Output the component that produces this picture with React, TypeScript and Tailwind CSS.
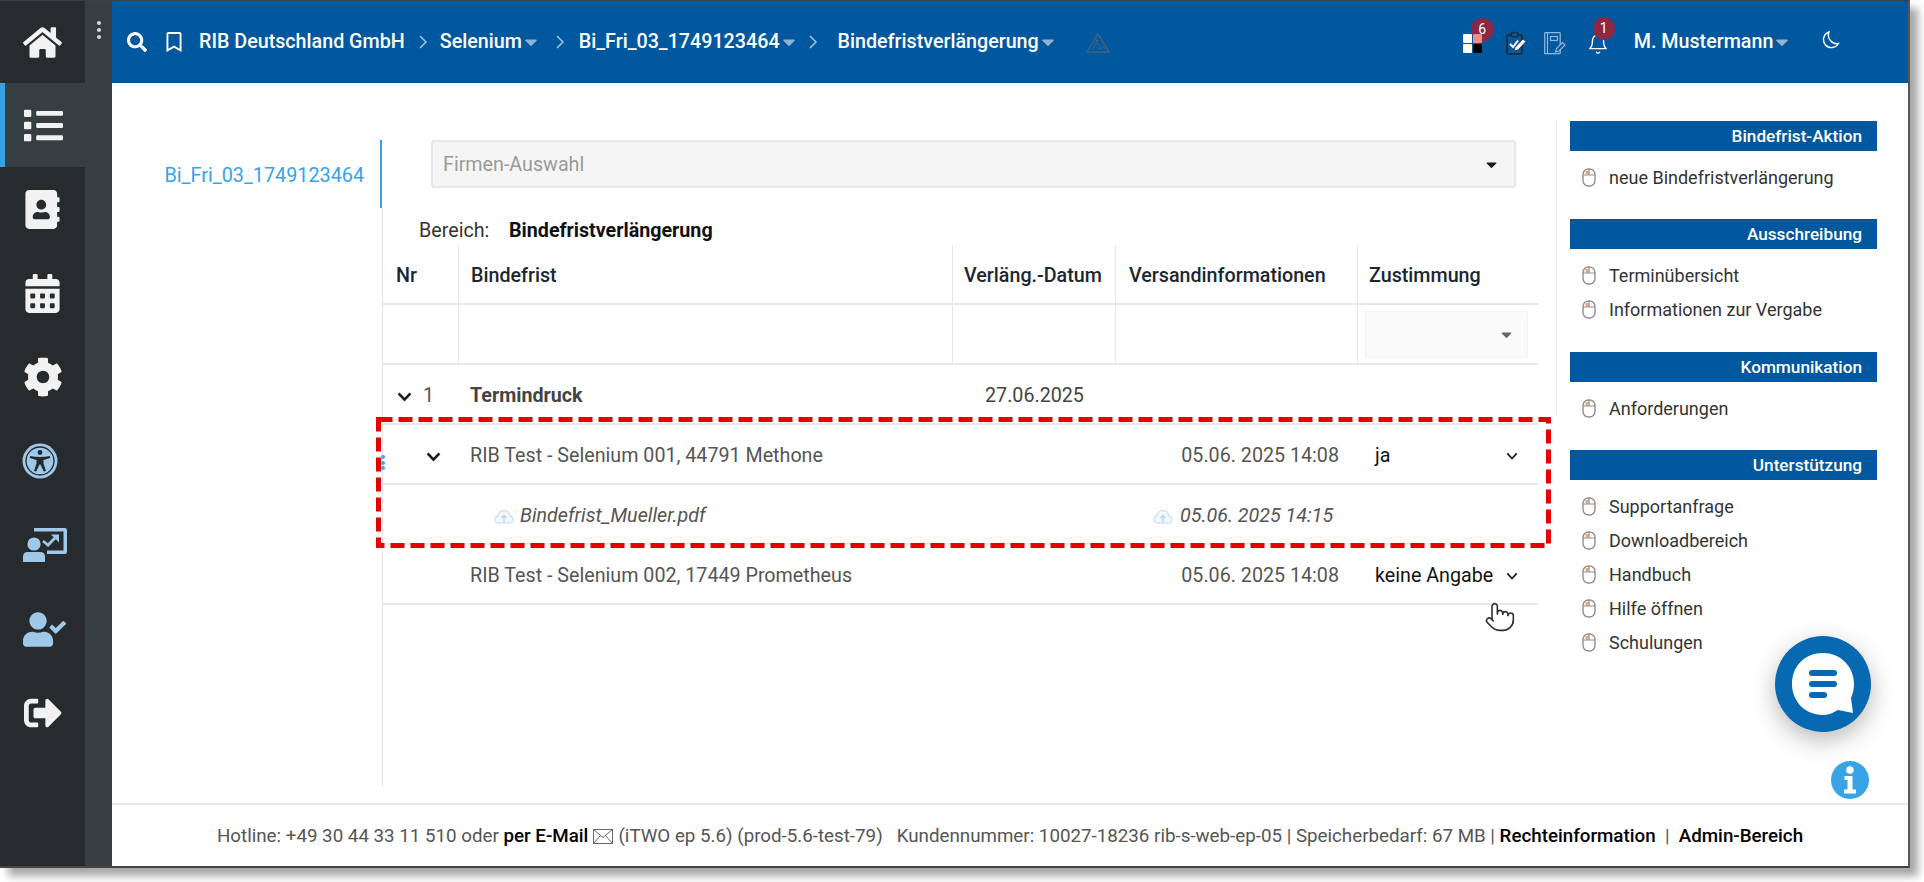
import React from "react";
import {
  FaHome, FaList, FaAddressBook, FaCalendarAlt, FaCog, FaUserCheck, FaSignOutAlt,
  FaSearch, FaRegBookmark, FaCaretDown,
} from "react-icons/fa";
import { FiBell } from "react-icons/fi";
import { Pointer } from "lucide-react";

function Chevron({ size = 14, w = 2.4 }: { size?: number; w?: number }) {
  return (
    <svg width={size} height={size} viewBox="0 0 14 14" fill="none" stroke="#1c1c1c" strokeWidth={w} className="shrink-0">
      <path d="M1.5 4 L7 10 L12.5 4" />
    </svg>
  );
}

function MouseIcon() {
  return (
    <svg width="14" height="19" viewBox="0 0 14 19" fill="none" className="shrink-0">
      <rect x="1" y="1" width="12" height="17" rx="5.5" stroke="#8f8f8f" strokeWidth="1.4" fill="#fff" />
      <rect x="3.5" y="3" width="3" height="3.5" fill="#f5a467" />
      <path d="M1 7 H13 M7 1 V7" stroke="#8f8f8f" strokeWidth="1.2" />
    </svg>
  );
}

function CloudIcon() {
  return (
    <svg width="20" height="15" viewBox="0 0 20 15" fill="#f2f8fd" stroke="#cfe3f4" strokeWidth="1.3" className="shrink-0">
      <path d="M5 14 Q1 14 1 10.5 Q1 7.5 4 7 Q5 1.5 10 1.5 Q15 1.5 16 7 Q19 7.5 19 10.5 Q19 14 15 14 Z" />
      <path d="M10 13 V7 M7.5 9 L10 6.5 L12.5 9" fill="none" stroke="#bcd8f0" strokeWidth="1.6" />
    </svg>
  );
}

function AccessIcon() {
  return (
    <svg width="36" height="36" viewBox="0 0 36 36" className="mr-[6px]">
      <circle cx="18" cy="18" r="17.5" fill="#a0c8e8" />
      <circle cx="18" cy="18" r="14" fill="none" stroke="#23282b" strokeWidth="1.3" />
      <circle cx="18" cy="9.5" r="2.4" fill="#23282b" />
      <path d="M8 13 Q18 15 28 13 L28 15 L21.5 17 L21.5 20.5 L24 28 L21.8 28.6 L18.5 21.5 L17.5 21.5 L14.2 28.6 L12 28 L14.5 20.5 L14.5 17 L8 15 Z" fill="#23282b" />
    </svg>
  );
}

function PresentIcon() {
  return (
    <svg width="44" height="34" viewBox="0 0 44 34" fill="#a0c8e8" className="ml-[4px]">
      <path d="M11 0 H42 Q44 0 44 2 V24 Q44 26 42 26 H24 V22.5 H40.5 V3.5 H11 Z" />
      <path d="M20 13 L25 17 L32 10" fill="none" stroke="#a0c8e8" strokeWidth="2.8" />
      <path d="M28 6.5 H36 V14.5 Z" />
      <circle cx="11" cy="16" r="6.6" />
      <path d="M0 34 V29 Q0 24 5 24 H17 Q22 24 22 29 V34 Z" />
    </svg>
  );
}

function ClipboardIcon() {
  return (
    <svg width="21" height="24" viewBox="0 0 21 24" fill="none">
      <rect x="1" y="4" width="15" height="19" rx="2" fill="#05589e" stroke="#1f2d3d" strokeWidth="1.8" />
      <rect x="5" y="1.5" width="7" height="4.5" rx="2" fill="#05589e" stroke="#1f2d3d" strokeWidth="1.5" />
      <path d="M4 13 L7 16 L12 9.5" stroke="#fff" strokeWidth="2" />
      <path d="M8 20 L9 16.5 L17 8 L20 10.5 L12 19 Z" fill="#fff" stroke="#1f2d3d" strokeWidth="0.8" />
    </svg>
  );
}

function NotebookIcon() {
  return (
    <svg width="22" height="23" viewBox="0 0 22 23" fill="none" stroke="#8fb9dc" strokeWidth="1.2">
      <rect x="0.7" y="0.7" width="15.5" height="21" rx="0.5" />
      <path d="M3.5 1 V21.5" />
      <rect x="6.5" y="4.5" width="7" height="4" />
      <path d="M11.5 20 L12.5 16.5 L18.5 10.5 L21 13 L15 19 Z" fill="#05589e" />
    </svg>
  );
}

function WarnIcon() {
  return (
    <svg width="24" height="21" viewBox="0 0 24 21" fill="none" stroke="#41617f" strokeWidth="1.5">
      <path d="M12 1.5 L23 20 H1 Z" />
      <circle cx="11" cy="8.5" r="1.3" fill="#41617f" stroke="none" />
      <path d="M7 17 L10 11 L13 13 L14 17 M15 17 L17 14 L19 17" strokeWidth="1.2" />
    </svg>
  );
}

function ChatIcon() {
  return (
    <svg width="62" height="62" viewBox="0 0 62 62">
      <path d="M31 0 C48 0 62 13 62 31 C62 36 61 40 59 45 L61 60 L46 57 C41 60 36 62 31 62 C13 62 0 48 0 31 C0 13 13 0 31 0 Z" fill="#fff" />
      <rect x="17" y="17" width="28" height="6" rx="3" fill="#0669b2" />
      <rect x="17" y="28" width="28" height="6" rx="3" fill="#0669b2" />
      <rect x="17" y="39" width="18" height="6" rx="3" fill="#0669b2" />
    </svg>
  );
}

function InfoGlyph() {
  return (
    <svg width="14" height="28" viewBox="0 0 14 28" fill="#fff">
      <circle cx="7" cy="4" r="3.8" />
      <path d="M1.5 10 H9.5 V23.5 H13 V27.5 H1 V23.5 H4.5 V14 H1.5 Z" />
    </svg>
  );
}

function EnvelopeIcon() {
  return (
    <svg width="20" height="15" viewBox="0 0 20 15" fill="none" stroke="#666" strokeWidth="1" className="mx-[5px] shrink-0">
      <rect x="0.5" y="0.5" width="19" height="14" />
      <path d="M0.5 0.5 L10 8.5 L19.5 0.5 M0.5 14.5 L7.5 6.5 M19.5 14.5 L12.5 6.5" />
    </svg>
  );
}

const Crumb = ({ children }: { children: React.ReactNode }) => (
  <span className="flex items-center">
    <span>{children}</span>
    <FaCaretDown size={20} className="text-[#8fb3d1] ml-[-1px]" />
  </span>
);

const Sep = () => (
  <svg width="8" height="14" viewBox="0 0 8 14" fill="none" stroke="#a9c5dd" strokeWidth="1.5" className="shrink-0">
    <path d="M1 1 L7 7 L1 13" />
  </svg>
);

const sideIcons = [
  <FaAddressBook size={39} />,
  <FaCalendarAlt size={39} />,
  <FaCog size={40} />,
  <AccessIcon />,
  <PresentIcon />,
  <FaUserCheck size={43} className="text-[#a0c8e8] ml-[4px]" />,
  <FaSignOutAlt size={38} />,
];

const sections = [
  { title: "Bindefrist-Aktion", items: ["neue Bindefristverlängerung"], pb: "pb-[25px]" },
  { title: "Ausschreibung", items: ["Terminübersicht", "Informationen zur Vergabe"], pb: "pb-[26px]" },
  { title: "Kommunikation", items: ["Anforderungen"], pb: "pb-[25px]" },
  { title: "Unterstützung", items: ["Supportanfrage", "Downloadbereich", "Handbuch", "Hilfe öffnen", "Schulungen"], pb: "pb-0" },
];

const gridCols = "grid grid-cols-[76px_494px_163px_242px_180px]";

export default function App() {
  return (
    <div className="relative w-[1924px] h-[882px] bg-white overflow-hidden font-['Roboto',sans-serif]">
      <div className="relative flex w-[1910px] h-[868px] bg-white border-t border-[#3a4045] border-b-2 border-b-[#444] border-r-2 border-r-[#555] shadow-[8px_8px_8px_rgba(0,0,0,0.35)]">
        {/* Sidebar */}
        <aside className="flex flex-col w-[112px] shrink-0 bg-[#373e42] text-[#f2f2f2]">
          <div className="flex h-[82px]">
            <div className="w-[85px] bg-[#272b2e] flex items-center justify-center">
              <FaHome size={39} />
            </div>
            <div className="flex-1 flex flex-col items-center gap-[3px] pt-[20px]">
              <span className="w-[4px] h-[4px] rounded-full bg-[#d8d8d8]" />
              <span className="w-[4px] h-[4px] rounded-full bg-[#d8d8d8]" />
              <span className="w-[4px] h-[4px] rounded-full bg-[#d8d8d8]" />
            </div>
          </div>
          <div className="flex h-[84px]">
            <div className="w-[85px] border-l-[5px] border-[#3aa0e6] flex items-center justify-center pr-[3px]">
              <FaList size={39} />
            </div>
          </div>
          <div className="flex-1 w-[85px] bg-[#272b2e] flex flex-col">
            {sideIcons.map((ic, i) => (
              <div key={i} className="h-[84px] flex items-center justify-center shrink-0">
                {ic}
              </div>
            ))}
          </div>
        </aside>

        {/* Main */}
        <div className="flex-1 flex flex-col min-w-0">
          <header className="h-[82px] shrink-0 bg-[#01589e] flex items-center text-white text-[19.7px] font-medium pl-[15px]">
            <FaSearch size={20} />
            <FaRegBookmark size={20} className="ml-[17px]" />
            <span className="ml-[15px]">RIB Deutschland GmbH</span>
            <span className="ml-[14px] mr-[13px]"><Sep /></span>
            <Crumb>Selenium</Crumb>
            <span className="ml-[15px] mr-[15px]"><Sep /></span>
            <Crumb>Bi_Fri_03_1749123464</Crumb>
            <span className="ml-[10px] mr-[21px]"><Sep /></span>
            <Crumb>Bindefristverlängerung</Crumb>
            <span className="ml-[28px]"><WarnIcon /></span>

            <div className="relative ml-[353px] w-[19px] h-[19px] grid grid-cols-2 gap-[1px] mt-[2px]">
              <span className="bg-white rounded-[1px]" />
              <span className="relative z-10 bg-[#f58a84] rounded-[1px]" />
              <span className="bg-white rounded-[1px]" />
              <span className="bg-black rounded-[1px]" />
              <span className="absolute left-[8px] top-[-16px] w-[23px] h-[23px] rounded-full bg-[#8b2846] text-white text-[14px] font-normal flex items-center justify-center">6</span>
            </div>
            <span className="ml-[24px] mt-[1px]"><ClipboardIcon /></span>
            <span className="ml-[17px] mt-[3px]"><NotebookIcon /></span>
            <div className="relative ml-[21px] mt-[4px] w-[20px] h-[22px]">
              <FiBell size={22} strokeWidth={1.5} className="text-white" />
              <span className="absolute left-[6px] top-[-16px] w-[22px] h-[23px] rounded-full bg-[#8b2846] text-white text-[14px] font-normal flex items-center justify-center">1</span>
            </div>
            <span className="ml-[27px]"><Crumb>M. Mustermann</Crumb></span>
            <svg width="18" height="18" viewBox="0 0 18 18" fill="none" stroke="#fff" strokeWidth="1.4" className="ml-[30px] mb-[4px]">
              <path d="M7 1 A8 8 0 1 0 16.5 12.5 A8.5 8.5 0 0 1 7 1 Z" />
            </svg>
          </header>

          <div className="flex-1 flex min-h-0">
            {/* Tabs */}
            <div className="w-[271px] shrink-0 flex flex-col pt-[57px] pb-[17px]">
              <div className="h-[68px] mr-[1px] border-r-2 border-[#3aa0e6] flex items-center justify-end pr-[16px] text-[#36a3eb] text-[19.8px] pt-[3px]">
                Bi_Fri_03_1749123464
              </div>
              <div className="flex-1 border-r border-[#e6e6e6]" />
            </div>

            {/* Center */}
            <div className="w-[1155px] shrink-0 pt-[57px]">
              <div className="ml-[48px] w-[1085px] h-[48px] bg-[#f5f5f5] border-2 border-[#e6e6e6] rounded-[3px] flex items-center justify-between pl-[10px] pr-[14px] text-[19.7px] text-[#9a9a9a]">
                <span className="pt-[2px]">Firmen-Auswahl</span>
                <FaCaretDown size={17} className="text-[#1c1c1c]" />
              </div>
              <div className="mt-[31px] ml-[36px] h-[24px] flex items-center text-[19.7px] text-[#333]">
                <span className="w-[90px]">Bereich:</span>
                <span className="font-bold text-[#111]">Bindefristverlängerung</span>
              </div>

              <div className="mt-[2px] text-[19.7px]">
                <div className={`${gridCols} h-[60px] border-b-2 border-[#e8e8e8] font-medium text-[#1b2730]`}>
                  <div className="border-r border-[#e6e6e6] pl-[13px] pt-[3px] flex items-center">Nr</div>
                  <div className="border-r border-[#e6e6e6] pl-[12px] pt-[3px] flex items-center">Bindefrist</div>
                  <div className="border-r border-[#e6e6e6] pl-[11px] pt-[3px] flex items-center">Verläng.-Datum</div>
                  <div className="border-r border-[#e6e6e6] pl-[13px] pt-[3px] flex items-center">Versandinformationen</div>
                  <div className="pl-[11px] pt-[3px] flex items-center">Zustimmung</div>
                </div>

                <div className={`${gridCols} h-[60px] border-b-2 border-[#e8e8e8]`}>
                  <div className="border-r border-[#e6e6e6]" />
                  <div className="border-r border-[#e6e6e6]" />
                  <div className="border-r border-[#e6e6e6]" />
                  <div className="border-r border-[#e6e6e6]" />
                  <div className="pl-[7px] pt-[6px]">
                    <div className="w-[163px] h-[47px] bg-[#fafafa] border border-[#f3f3f3] rounded-[2px] flex items-center justify-end pr-[12px]">
                      <FaCaretDown size={17} className="text-[#666]" />
                    </div>
                  </div>
                </div>

                <div className={`${gridCols} h-[60px] pt-[4px] border-b-2 border-[#e8e8e8] text-[#444]`}>
                  <div className="flex items-center pl-[14px] gap-[11px]">
                    <Chevron size={15} />
                    <span className="text-[#555]">1</span>
                  </div>
                  <div className="flex items-center pl-[11px] font-bold">Termindruck</div>
                  <div className="flex items-center pl-[32px]">27.06.2025</div>
                  <div />
                  <div />
                </div>

                <div className={`${gridCols} relative h-[60px] pt-[4px] border-b-2 border-[#e8e8e8] text-[#555]`}>
                  <div className="flex items-center pl-[43px]"><Chevron size={15} /></div>
                  <div className="flex items-center pl-[11px]">RIB Test - Selenium 001, 44791 Methone</div>
                  <div />
                  <div className="flex items-center justify-end pr-[19px]">05.06. 2025 14:08</div>
                  <div className="flex items-center justify-between pl-[17px] pr-[20px] text-[#111]">
                    <span>ja</span>
                    <Chevron size={12} w={2} />
                  </div>
                  <div className="absolute left-[-2px] top-[30px] flex flex-col gap-[1.5px]">
                    <span className="w-[4px] h-[4px] rounded-full bg-[#39a8ef]" />
                    <span className="w-[4px] h-[4px] rounded-full bg-[#39a8ef]" />
                    <span className="w-[4px] h-[4px] rounded-full bg-[#39a8ef]" />
                  </div>
                </div>

                <div className={`${gridCols} h-[60px] pt-[4px] border-b-2 border-[#e8e8e8] text-[#555] italic`}>
                  <div />
                  <div className="flex items-center pl-[35px] gap-[6px]">
                    <CloudIcon />
                    <span>Bindefrist_Mueller.pdf</span>
                  </div>
                  <div />
                  <div className="flex items-center pl-[37px] gap-[7px]">
                    <CloudIcon />
                    <span>05.06. 2025 14:15</span>
                  </div>
                  <div />
                </div>

                <div className={`${gridCols} h-[60px] pt-[4px] border-b-2 border-[#e8e8e8] text-[#555]`}>
                  <div />
                  <div className="flex items-center pl-[11px]">RIB Test - Selenium 002, 17449 Prometheus</div>
                  <div />
                  <div className="flex items-center justify-end pr-[19px]">05.06. 2025 14:08</div>
                  <div className="flex items-center justify-between pl-[17px] pr-[20px] text-[#111]">
                    <span>keine Angabe</span>
                    <Chevron size={12} w={2} />
                  </div>
                </div>
              </div>
            </div>

            {/* Right panel */}
            <div className="w-[18px] shrink-0" />
            <div className="w-px h-[293px] mt-[38px] bg-[#ececec] shrink-0" />
            <div className="w-[307px] ml-[13px] mt-[38px] shrink-0">
              {sections.map((s) => (
                <section key={s.title} className={s.pb}>
                  <div className="h-[30px] pt-[2px] bg-[#01589e] text-white font-medium text-[17.2px] flex items-center justify-end pr-[15px]">
                    {s.title}
                  </div>
                  <ul className="pt-[9px]">
                    {s.items.map((it) => (
                      <li key={it} className="h-[34px] flex items-center pl-[12px] gap-[13px] text-[18px] text-[#333]">
                        <MouseIcon />
                        <span>{it}</span>
                      </li>
                    ))}
                  </ul>
                </section>
              ))}
            </div>
          </div>

          <footer className="h-[63px] pt-[2px] shrink-0 border-t-2 border-[#e8e8e8] flex items-center justify-center text-[18.75px] text-[#555] whitespace-pre">
            <span>Hotline: +49 30 44 33 11 510 oder </span>
            <b className="font-medium text-black">per E-Mail</b>
            <EnvelopeIcon />
            <span>(iTWO ep 5.6) (prod-5.6-test-79)</span>
            <span className="ml-[14px]">Kundennummer: 10027-18236 rib-s-web-ep-05 | Speicherbedarf: 67 MB | </span>
            <b className="font-medium text-black">Rechteinformation</b>
            <span>  |  </span>
            <b className="font-medium text-black">Admin-Bereich</b>
          </footer>
        </div>

        {/* Red annotation */}
        <svg className="absolute left-[376px] top-[416px] pointer-events-none" width="1176" height="132" viewBox="0 0 1176 132" fill="none">
          <rect x="2.5" y="2.5" width="1170" height="126" stroke="#e60000" strokeWidth="5" strokeDasharray="14 6" />
        </svg>

        {/* Mouse pointer */}
        <Pointer size={32} strokeWidth={1.2} fill="#fff" className="absolute left-[1484px] top-[600px] text-[#333]" />

        {/* Chat */}
        <div className="absolute left-[1775px] top-[635px] w-[96px] h-[96px] rounded-full bg-[#0669b2] flex items-center justify-center shadow-[0_8px_24px_rgba(0,0,0,0.28)]">
          <ChatIcon />
        </div>
        <div className="absolute left-[1831px] top-[760px] w-[38px] h-[38px] rounded-full bg-[#38a3e5] flex items-center justify-center">
          <InfoGlyph />
        </div>
      </div>
    </div>
  );
}
